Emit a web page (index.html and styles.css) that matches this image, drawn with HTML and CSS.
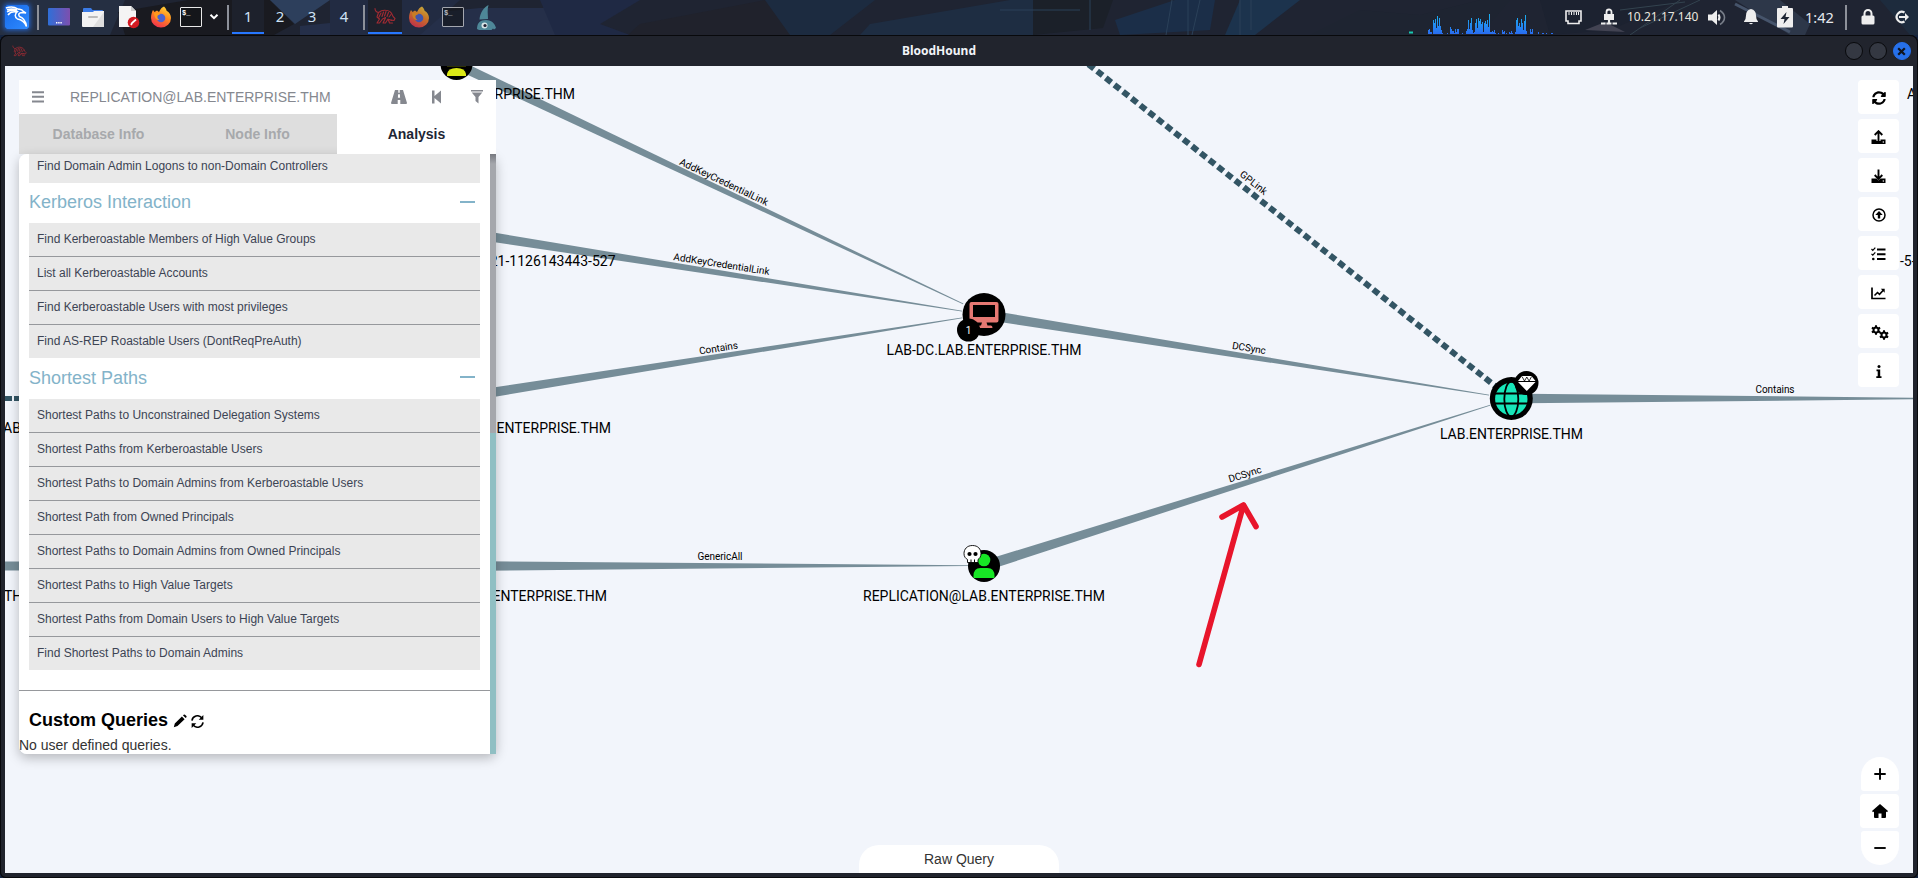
FILE: index.html
```html
<!DOCTYPE html>
<html lang="en">
<head>
<meta charset="utf-8">
<title>BloodHound</title>
<link rel="stylesheet" href="styles.css">
</head>
<body>
<svg width="0" height="0" class="defs">
  <defs>
    <linearGradient id="kali" x1="0" y1="0" x2="1" y2="1"><stop offset="0" stop-color="#1668e8"/><stop offset="1" stop-color="#2f8bff"/></linearGradient>
    <linearGradient id="desk"><stop offset="0" stop-color="#2f6fd8"/><stop offset="1" stop-color="#7d4fae"/></linearGradient>
    <linearGradient id="fire" x1="0.8" y1="0" x2="0.3" y2="1"><stop offset="0" stop-color="#ffd83a"/><stop offset="0.45" stop-color="#ff8a1e"/><stop offset="1" stop-color="#f2304f"/></linearGradient>
    <linearGradient id="cpu" x1="0" y1="14" x2="0" y2="34" gradientUnits="userSpaceOnUse"><stop offset="0" stop-color="#19b4f0"/><stop offset="1" stop-color="#2a6cf0"/></linearGradient>
    <symbol id="firefox" viewBox="0 0 22 22">
      <path d="M14 0.5c1.500 1.200 2.200 2.600 2.600 4.200 2.600 1.600 4.400 4 4.400 7.200a10 9.700 0 0 1-20 0C1 8.500 2 6 3 4l1.500 2 2.500-1.500 2 1.500c1.500-3 3-5 5-5.500z" fill="url(#fire)"/>
      <circle cx="11" cy="12" r="4.300" fill="#4b63d0"/>
      <path d="M4 7c2-1 5-.5 6.500 1l-3 1.500c-.5 2 .5 3.500 2 4.500-3 .5-5-2-5.500-7z" fill="#ff9a1c"/>
    </symbol>
    <symbol id="hound" viewBox="0 0 22 18">
      <g fill="none" stroke="currentColor" stroke-width="1.100" stroke-linecap="round" stroke-linejoin="round">
        <path d="M1 1.500c0 2 1.500 3.500 3.500 4 2-1.500 4.500-2.500 7-2.200 3 .2 5.500 1.700 6.500 4 .5 1.500 1.500 3 3 4.200l-1 2-3-.5"/>
        <path d="M4.500 5.500L3 10l2.500 2-2.500 4h2.500l3-4 3-1.500M7 6l-2 4M9.500 5L8 9.500M12 4.500L10.500 9M14.500 5.500L13 9.500M17 7.500l-2 2.500M11.500 11L9 16h2.500l2.500-4 1.500 4h3M15 12.500l3 1"/>
      </g>
    </symbol>
    <symbol id="sync" viewBox="0 0 512 512"><path d="M370.700 133.300C339.500 104 298.900 88 255.800 88c-77.500.1-144.300 53.200-162.800 126.900-1.300 5.400-6.100 9.100-11.700 9.100H24.100c-7.500 0-13.200-6.800-11.800-14.200C33.900 94.900 134.800 8 256 8c66.400 0 126.800 26.100 171.300 68.700L463 41c15.100-15.100 41-4.400 41 17v134c0 13.300-10.700 24-24 24H346c-21.400 0-32.100-25.900-17-41l41.700-41.700zM32 296h134c21.400 0 32.100 25.900 17 41l-41.800 41.800c31.300 29.300 71.800 45.300 114.900 45.200 77.400-.1 144.300-53.100 162.800-126.800 1.300-5.400 6.100-9.100 11.700-9.100h57.300c7.500 0 13.200 6.800 11.800 14.200C478.100 417.100 377.200 504 256 504c-66.400 0-126.800-26.100-171.300-68.700L49 471c-15.100 15.100-41 4.400-41-17V320c0-13.300 10.700-24 24-24z" fill="currentColor"/></symbol>
    <symbol id="gear" viewBox="-10 -10 20 20"><path d="M-2-9.500h4v19h-4z" fill="currentColor"/><path d="M-2-9.500h4v19h-4z" fill="currentColor" transform="rotate(60)"/><path d="M-2-9.500h4v19h-4z" fill="currentColor" transform="rotate(120)"/><circle r="5" fill="none" stroke="currentColor" stroke-width="4"/><circle r="3" fill="#fff"/></symbol>
  </defs>
</svg>

<header class="taskbar">
  <svg class="wallpaper" width="1918" height="35" viewBox="0 0 1918 35" preserveAspectRatio="none">
    <rect width="1918" height="35" fill="#1f2432"/>
    <path d="M0 0h125l-15 35H0z" fill="#252f42"/>
    <path d="M118 12l70-12h82l24 24-20 11H125z" fill="#191a20"/>
    <path d="M270 0h60l-35 24z" fill="#2d3f5c"/>
    <path d="M300 26L480 8h70l60 27H300z" fill="#252f49"/>
    <path d="M330 0h130l-40 35h-90z" fill="#222b42"/>
    <path d="M540 0h100l-40 24 30 11h-75z" fill="#1f2944"/>
    <path d="M640 24L765 0l40 14-15 21H628z" fill="#20222c"/>
    <path d="M765 0h110l-45 35h-40z" fill="#1c2b40"/>
    <path d="M870 24l140-24h23v35H860z" fill="#1e2d42"/>
    <path d="M1033 0h80l-10 28-70 7z" fill="#1b2029"/>
    <path d="M1115 20l60-20h40l-5 30-90 5z" fill="#1b2e48"/>
    <path d="M1240 0h60l-45 35h-30z" fill="#1c334d"/>
    <path d="M1310 35l50-25 60 5 60-15h30l-30 35z" fill="#1e2431"/>
    <path d="M1000 10h80M1090 0v30M1172 0l-6 35M1188 0v35M1200 0l-8 35M1240 0v35M1251 0v30" stroke="#2b4159" stroke-width="1" fill="none"/>
    <path d="M1540 0l140 0-70 30-60 5z" fill="#1c2230"/>
    <path d="M1585 30l20-8 20 10z" fill="#424352"/>
    <path d="M1630 35l50-35M1640 28l60-28M1620 10l65-8" stroke="#33434f" fill="none"/>
    <path d="M1735 0h45l30 24-5 11h-15z" fill="#2d3749"/>
    <path d="M1735 4l55 28" stroke="#46546b" stroke-width="3"/>
    <path d="M1880 0h38v35h-8z" fill="#1d2b3d"/>
  </svg>
  <div class="launchers">
    <svg class="ic kali" width="24" height="24" viewBox="0 0 24 24"><rect width="24" height="24" rx="2" fill="url(#kali)"/><path d="M1 3c5-2 9-1 12 1 2 .5 4 0 5 2l3 2-4-.5c-3 0-4 2-2.500 4 3 1 6 3 7 10-2-5-5-7-9-7.500-3-2-3-5 0-7.500C9 5 5 5 2 7M2 5c4-2 7-1 10 0M3 10c2-3 5-3.500 8-3" fill="none" stroke="#fff" stroke-width="1.500"/></svg>
    <i class="sep sep-a"></i>
    <svg class="ic desk" width="22" height="18" viewBox="0 0 22 18"><rect width="22" height="17.500" rx="1" fill="url(#desk)"/><path d="M8 14.800h6" stroke="#fff" stroke-width="1.500" stroke-dasharray="1.400 .8"/></svg>
    <svg class="ic folder" width="22" height="21" viewBox="0 0 22 21"><path d="M1 5V2q0-1 1-1h7l1.500 2H20q1 0 1 1v3H1z" fill="#3b7be6"/><path d="M0 5h11l1-1h10v15q0 1-1 1H1q-1 0-1-1z" fill="#f2f2f2"/><path d="M22 5v15H11z" fill="#dedede"/><rect x="6" y="9" width="10" height="2" rx="1" fill="#bbb"/></svg>
    <svg class="ic doc" width="21" height="24" viewBox="0 0 21 24"><path d="M0 1h12l5 5v16H0z" fill="#f4f4f4"/><path d="M12 1v5h5z" fill="#ccc"/><circle cx="14.500" cy="17.500" r="5.800" fill="#d31a22"/><path d="M12 20l1-2 4-3.500" stroke="#fff" stroke-width="1.800"/></svg>
    <svg class="ic fox" width="22" height="22"><use href="#firefox"/></svg>
    <span class="ic term">$_</span>
    <svg class="ic chev" width="10" height="8" viewBox="0 0 10 8"><path d="M1.500 1.800L5 5.200l3.500-3.400" fill="none" stroke="#fff" stroke-width="2"/></svg>
    <i class="sep sep-b"></i>
    <span class="ws active">1</span><span class="ws">2</span><span class="ws">3</span><span class="ws">4</span>
    <i class="sep sep-c"></i>
    <span class="task active"><svg width="22" height="18" class="hound"><use href="#hound"/></svg></span>
    <svg class="ic fox dim" width="22" height="22"><use href="#firefox"/></svg>
    <span class="ic term dim">$_</span>
    <svg class="ic shark" width="19" height="25" viewBox="0 0 19 25"><path d="M11.500 0C7 2 3 8 2.500 14.500L11 14c0-5-1-9 .5-14zM0 24c0-6 3-9 9-9 6 0 9 4 10 8l-2 1.500-1-1-1.500 1.500H2z" fill="#4e8798"/><circle cx="7.500" cy="20.500" r="3" fill="#d9e6e8"/><circle cx="8" cy="20.500" r="1.600" fill="#223"/></svg>
  </div>
  <div class="tray">
    <svg class="cpu" width="150" height="34" viewBox="1405 0 150 34"><path d="M1409 32.500h4" stroke="#19c8b0" stroke-width="2"/>
      <path fill="url(#cpu)" d="M1428 34v-4h1v-1h1v3h2v2zM1433 34V20h1v3h1v-4h1v9h1V16h1v10h1v-8h1v8h1v4h1v3h1v1zM1447 33h1v1h-1zM1450 34v-7h1v2h1v2h2v2h1v-4h1v3h1v-3h2v5zM1462 33h1v1h-1zM1466 34v-3h1v-2h1v-9h1v9h1v-6h1v-5h1v12h1v3h1v-1h1V23h1v-4h1v9h1V18h1v3h1v-2h1v5h1v-2h1v10h1v-9h1v-2h1v3h1v-4h1v7h1V14h1v18h2v-1h1v1h1v-2h1v3h1v1zM1498 33h1v1h-1zM1502 34v-4h1v2h1v-1h1v3zM1506 33h1v1h-1zM1509 34v-2h1v1h1v-2h1v2h1v1zM1515 34v-2h1v-12h1v-2h1v8h1v-3h1v4h1v-8h1v4h1v7h1v-9h1v-6h1v16h1v3h1v1zM1530 34v-5h1v3h1v-3h1v5zM1538 32h1v2h-1zM1542 33h2v1h-2zM1546 33h1v1h-1zM1551 33h2v1h-2z"/></svg>
    <svg class="ic eth" width="17" height="15" viewBox="0 0 17 15"><path d="M1 1h15v10h-2v2.500H3V11H1z" fill="none" stroke="#eee" stroke-width="1.600"/><path d="M4 2v3M6.500 2v3M9 2v3M11.500 2v3M13.500 2v3" stroke="#eee"/></svg>
    <svg class="ic vpn" width="16" height="18" viewBox="0 0 16 18"><path d="M3 6h10v6H3z" fill="#eee"/><path d="M5.500 6V4a2.500 2.500 0 0 1 5 0v2" fill="none" stroke="#eee" stroke-width="1.800"/><path d="M8 12v3M0 15.500h4.500M5.500 15.500h5M11.500 15.500H16" stroke="#eee" stroke-width="2.200"/></svg>
    <span class="ip">10.21.17.140</span>
    <svg class="ic vol" width="18" height="17" viewBox="0 0 18 17"><path d="M0 5.500h4L9 1v15L4 11.500H0z" fill="#eee"/><path d="M10.500 5.500q2 3 0 6" stroke="#eee" stroke-width="2" fill="none"/><path d="M12 1.500q4.500 3 4.500 7t-4.500 7" stroke="#777d88" stroke-width="1.600" fill="none"/></svg>
    <svg class="ic bell" width="14" height="16" viewBox="0 0 14 16"><path d="M7 0q5 1 5 6.500 0 4 2 6V13H0v-.5q2-2 2-6Q2 1 7 0zM5 14h4q-2 2.500-4 0z" fill="#eee"/></svg>
    <svg class="ic bat" width="16" height="22" viewBox="0 0 16 22"><path d="M5 0h6v2h4q1 0 1 1v17.500q0 1-1 1H1q-1 0-1-1V3q0-1 1-1h4z" fill="#eee"/><path d="M9.500 6L3.500 13h4L6.500 18l6-7h-4z" fill="#1c2433"/></svg>
    <span class="clock">1:42</span>
    <i class="sep sep-d"></i>
    <svg class="ic lock" width="14" height="16" viewBox="0 0 14 16"><rect x=".5" y="6.500" width="13" height="9" rx="1.500" fill="#eee"/><path d="M3.500 7V4.500a3.500 3.500 0 0 1 7 0V7" fill="none" stroke="#eee" stroke-width="2"/></svg>
    <svg class="ic out" width="16" height="14" viewBox="0 0 16 14"><path d="M10.500 2.500a5.200 5.200 0 1 0 0 9" fill="none" stroke="#eee" stroke-width="2.200"/><path d="M5 6h6V3l4 4-4 4V8H5z" fill="#eee"/></svg>
  </div>
</header>

<div class="window">
  <div class="titlebar">
    <svg class="hound" width="15" height="12"><use href="#hound"/></svg>
    <span class="title">BloodHound</span>
    <div class="wbtns"><i></i><i></i><i class="close"><svg width="9" height="9" viewBox="0 0 9 9"><path d="M1.200 1.200l6.600 6.600M7.800 1.200L1.200 7.800" stroke="#10141d" stroke-width="2.200"/></svg></i></div>
  </div>

  <main class="stage">
    <svg class="graph" width="1908" height="807" viewBox="5 66 1908 807">
      <g class="edge">
        <path d="M458.100 59.500L453.900 68.500 963 304.300 963.400 303.500z"/>
        <path d="M457.800 226.500L456.200 236.500 962 311.500 962.100 310.700z"/>
        <path d="M456.200 393L457.800 403 962.100 318.300 962 317.500z"/>
        <path d="M457 561v10l511-5v-.8z"/>
        <path d="M984.700 309.500L983.300 319.500 1489 395.500 1489.200 394.700z"/>
        <path d="M982.400 561L985.600 571 1490.500 405.600 1490.300 404.800z"/>
        <path d="M1511 393.500v10l405-4.200v-1.600z"/>
        <path d="M5 561.500h16v9H5z"/>
      </g>
      <path d="M5 398.500h7M14 398.500h7" stroke="#335564" stroke-width="5"/>
      <path d="M1088.500 64.300L1511 398.500" stroke="#335564" stroke-width="6" stroke-dasharray="7 4"/>
      <g class="elabel">
        <text transform="translate(722.500 185) rotate(25.400)" textLength="97">AddKeyCredentialLink</text>
        <text transform="translate(721 267.500) rotate(8.900)" textLength="97">AddKeyCredentialLink</text>
        <text transform="translate(719 351.500) rotate(-9)" textLength="39">Contains</text>
        <text transform="translate(720 560)" textLength="45">GenericAll</text>
        <text transform="translate(1248.500 351.500) rotate(9.100)" textLength="34">DCSync</text>
        <text transform="translate(1246 477.500) rotate(-17.500)" textLength="34">DCSync</text>
        <text transform="translate(1251.500 185.500) rotate(38.200)" textLength="32">GPLink</text>
        <text transform="translate(1775 393)" textLength="39">Contains</text>
      </g>
      <g class="nlabel">
        <text x="984" y="355" class="mid" textLength="195">LAB-DC.LAB.ENTERPRISE.THM</text>
        <text x="1511.500" y="439" class="mid" textLength="143">LAB.ENTERPRISE.THM</text>
        <text x="984" y="601" class="mid" textLength="242">REPLICATION@LAB.ENTERPRISE.THM</text>
        <text x="575" y="99" class="end">RPRISE.THM</text>
        <text x="615.500" y="266" class="end">21-1126143443-527</text>
        <text x="611" y="433" class="end">ENTERPRISE.THM</text>
        <text x="607" y="601" class="end">ENTERPRISE.THM</text>
        <text x="3" y="433">AB</text>
        <text x="4" y="601">TH</text>
        <text x="1907" y="99">A</text>
        <text x="1900" y="265.500">-5-</text>
      </g>
      <g>
        <circle cx="456.500" cy="64" r="16"/>
        <path d="M447 76v-2q1-6 9.500-6t9.500 6v2z" fill="#dbe817"/><path d="M447 66h19" stroke="#5d630a"/>
      </g>
      <g>
        <circle cx="984" cy="314.500" r="21.500"/>
        <path d="M971.500 302h25q2 0 2 2v16.500q0 2-2 2h-10l1 3h3.500q1.500 0 1.500 2.500H980q-2-2.500 0-2.500h1l1-3h-10.500q-2 0-2-2V304q0-2 2-2zM973 305v12h22v-12z" fill="#e67873" fill-rule="evenodd"/>
        <circle cx="968.500" cy="330" r="11.500"/>
        <text x="968.500" y="333.500" class="badge">1</text>
      </g>
      <g>
        <circle cx="1511.300" cy="398.500" r="21.500"/>
        <circle cx="1511.300" cy="399" r="16.200" fill="#17e6b9"/>
        <path d="M1494 393.500h35M1494 403.500h35" stroke="#000" stroke-width="1.800"/>
        <ellipse cx="1511.300" cy="399" rx="7" ry="17.500" fill="none" stroke="#000" stroke-width="1.800"/>
        <circle cx="1526.500" cy="383" r="12"/>
        <path d="M1522 376h9.500l4 5h-17.500zM1518 382h17.500l-8.700 9z" fill="#fff"/><path d="M1522 376.500l2.500 4.500 2.300-4 2.300 4 2.500-4.500" fill="none" stroke="#000" stroke-width=".8"/>
      </g>
      <g>
        <circle cx="984" cy="566" r="16"/>
        <circle cx="984" cy="560" r="6.300" fill="#17e625"/>
        <path d="M973.500 578v-2q0-8 7-8h7q7 0 7 8v2z" fill="#17e625"/>
        <path d="M972.500 545.500c5.500 0 8.500 3.600 8.500 8.200 0 3-1.500 4.800-3 5.800v3h-10.500v-3c-1.800-1-3.500-2.800-3.500-5.800 0-4.600 3-8.200 8.500-8.200z" fill="#fff" stroke="#000" stroke-width=".9"/>
        <circle cx="969.500" cy="554" r="2.100"/><circle cx="975.500" cy="554" r="2.100"/><path d="M971 559.500v3M974.500 559.500v3" stroke="#000" stroke-width="1"/>
      </g>
      <path d="M1199 664.500L1243.500 505M1222 517L1243.500 505L1256 526.500" fill="none" stroke="#e8152b" stroke-width="5.600" stroke-linecap="round" stroke-linejoin="round"/>
    </svg>

    <section class="panel">
      <div class="search">
        <svg class="bars" width="12" height="12" viewBox="0 0 12 12"><path d="M0 1.200h12M0 5.800h12M0 10.500h12" stroke="currentColor" stroke-width="2"/></svg>
        <span class="query">REPLICATION@LAB.ENTERPRISE.THM</span>
        <svg class="road" width="16" height="14" viewBox="0 0 16 14"><path d="M4 0h3.300v2.800h1.400V0H12l4 13q0 1-1 1H9.300v-4H6.700v4H1q-1 0-1-1zM7.100 4.300l-.2 3.400h2.200l-.2-3.400z" fill="currentColor" fill-rule="evenodd"/></svg>
        <svg class="back" width="9" height="14" viewBox="0 0 9 14"><path d="M0 .5h2.500v5.500L9 .5v13L2.500 8v5.500H0z" fill="currentColor"/></svg>
        <svg class="filt" width="12" height="14" viewBox="0 0 12 14"><path d="M0 0h12v1.500H0zM.7 2.500h10.600L7.500 7v6.500L4.500 11V7z" fill="currentColor"/></svg>
      </div>
      <nav class="tabs"><span>Database Info</span><span class="nodeinfo">Node Info</span><span class="on">Analysis</span></nav>
      <div class="body">
        <div class="scroll">
          <ul class="list first"><li>Find Domain Admin Logons to non-Domain Controllers</li></ul>
          <h3>Kerberos Interaction<i></i></h3>
          <ul class="list">
            <li>Find Kerberoastable Members of High Value Groups</li>
            <li>List all Kerberoastable Accounts</li>
            <li>Find Kerberoastable Users with most privileges</li>
            <li>Find AS-REP Roastable Users (DontReqPreAuth)</li>
          </ul>
          <h3>Shortest Paths<i></i></h3>
          <ul class="list">
            <li>Shortest Paths to Unconstrained Delegation Systems</li>
            <li>Shortest Paths from Kerberoastable Users</li>
            <li>Shortest Paths to Domain Admins from Kerberoastable Users</li>
            <li>Shortest Path from Owned Principals</li>
            <li>Shortest Paths to Domain Admins from Owned Principals</li>
            <li>Shortest Paths to High Value Targets</li>
            <li>Shortest Paths from Domain Users to High Value Targets</li>
            <li>Find Shortest Paths to Domain Admins</li>
          </ul>
          <div class="rule"></div>
          <h4>Custom Queries
            <svg class="pencil" width="14" height="14" viewBox="0 0 14 14"><path d="M1.800 9.400L8.900 2.500l2.700 2.700-7.100 6.900L.8 13.200zM10 1.400l.7-.7q.6-.6 1.300 0L13.400 2q.5.600 0 1.300l-.7.800z" fill="currentColor"/></svg>
            <svg class="re" width="13" height="13" viewBox="0 0 14 14"><path d="M1 6a6 6 0 0 1 10.500-3M13 8A6 6 0 0 1 2.500 11" fill="none" stroke="currentColor" stroke-width="1.700"/><path d="M13.300 0v5h-5zM.7 14V9h5z" fill="currentColor"/></svg>
          </h4>
          <p>No user defined queries.</p>
        </div>
        <div class="bar"><div class="thumb"></div></div>
      </div>
    </section>

    <div class="tools">
      <button><svg width="14" height="14"><use href="#sync"/></svg></button>
      <button><svg width="15" height="15" viewBox="0 0 15 15"><path d="M.5 9.500h14v4.500H.5z"/><path d="M5.500 9h4v2h-4z" fill="#fff"/><path d="M7.500 11V1.500M3.700 5l3.800-3.800L11.300 5" fill="none" stroke="#000" stroke-width="1.900"/><circle cx="12.300" cy="12" r=".7" fill="#fff"/></svg></button>
      <button><svg width="15" height="15" viewBox="0 0 15 15"><path d="M.5 9.500h14v4.500H.5z"/><path d="M4.500 8l3 3.500 3-3.500z" fill="#fff"/><path d="M7.500 .500v9M3.700 6l3.800 3.800L11.300 6" fill="none" stroke="#000" stroke-width="1.900"/><circle cx="12.300" cy="12" r=".7" fill="#fff"/></svg></button>
      <button><svg width="14" height="14" viewBox="0 0 14 14"><circle cx="7" cy="7" r="6" fill="none" stroke="#000" stroke-width="1.500"/><path d="M7 3l3.700 4H8.200v3.500H5.800V7H3.300z"/></svg></button>
      <button><svg width="15" height="14" viewBox="0 0 15 14"><path d="M6 2.500h8.500M6 7.200h8.500M6 12h8.500" stroke="#000" stroke-width="1.900"/><path d="M.5 2l1.300 1.300L4.300.600M.5 6.800l1.300 1.300 2.500-2.700" fill="none" stroke="#000" stroke-width="1.200"/><circle cx="2.300" cy="12" r="1.300"/></svg></button>
      <button><svg width="15" height="13" viewBox="0 0 15 13"><path d="M1 .5v11h13.500" fill="none" stroke="#000" stroke-width="1.700"/><path d="M3.500 8.500l3-3 2 1.800 4-4.300" fill="none" stroke="#000" stroke-width="1.600"/><path d="M9.800 1.800h3.900v3.900z"/></svg></button>
      <button><svg class="gears" width="18" height="15" viewBox="0 0 18 15"><use href="#gear" x="0" y="0" width="10" height="10"/><use href="#gear" x="8" y="5" width="10" height="10"/></svg></button>
      <button><svg width="6" height="13" viewBox="0 0 6 13"><circle cx="3" cy="1.500" r="1.500"/><path d="M.5 4.500h3.700v6.800h1.300V13H.3v-1.700h1.400V6.200H.5z"/></svg></button>
    </div>

    <div class="zoomer">
      <button class="in"><svg width="12" height="12" viewBox="0 0 12 12"><path d="M6 .3v11.400M.3 6h11.400" stroke="#000" stroke-width="1.900"/></svg></button>
      <button class="home"><svg width="16" height="14" viewBox="0 0 16 14"><path d="M8 0l8 7-1 1.200-1-.700V13q0 1-1 1H9.500V9.500h-3V14H3q-1 0-1-1V7.500l-1 .7L0 7z"/></svg></button>
      <button class="outz"><svg width="12" height="12" viewBox="0 0 12 12"><path d="M.3 6h11.400" stroke="#000" stroke-width="1.900"/></svg></button>
    </div>

    <div class="raw">Raw Query</div>
  </main>
</div>
</body>
</html>
```

FILE: styles.css
```css
* { box-sizing: border-box; }
body { margin: 0; width: 1918px; height: 878px; overflow: hidden; background: #15243f; font-family: "Liberation Sans", Arial, sans-serif; }
.defs { position: absolute; }
svg { display: block; flex: none; }

.taskbar { position: relative; height: 35px; display: flex; justify-content: space-between; color: #e6e9ee; font-family: "Noto Sans", sans-serif; }
.wallpaper { position: absolute; inset: 0; }
.launchers, .tray { position: relative; display: flex; align-items: center; height: 34px; }
.launchers { padding-left: 5px; }
.kali { border-radius: 2px; box-shadow: 0 0 5px 1px #2468d8; }
.sep { flex: none; width: 2px; height: 25px; background: #8d919a; }
.sep-a { margin: 0 9px 0 8px; }
.desk { margin-right: 12px; }
.folder { margin-right: 15px; }
.doc { margin-right: 10px; }
.fox { margin-right: 8px; }
.term { flex: none; width: 22px; height: 20px; border: 1.500px solid #e8e8e8; border-radius: 1px; background: #14161a; color: #fff; font: bold 7px/9px "Liberation Mono", monospace; padding: 1px 0 0 1px; }
.chev { margin: 0 8px 0 7px; }
.sep-b { margin: 0 3px 0 0; }
.ws { width: 32px; height: 34px; line-height: 33px; text-align: center; font-size: 15px; color: #cfe2f5; }
.active { background: #1d212c; border-bottom: 2px solid #2777ff; }
.sep-c { margin: 0 3px; }
.task { width: 34px; height: 34px; display: flex; align-items: center; justify-content: center; margin-right: 6px; }
.hound { color: #a22b33; }
.dim { opacity: .65; }
.fox.dim { margin-right: 12px; opacity: .75; }
.shark { margin-left: 13px; }

.cpu { margin-right: 10px; }
.eth { margin-right: 19px; }
.vpn { margin-right: 10px; }
.ip { width: 71px; font-size: 12px; line-height: 32px; margin-right: 10px; color: #e9e6df; }
.vol { margin-right: 18px; }
.bell { margin-right: 19px; }
.bat { margin-right: 12px; }
.clock { width: 28px; font-size: 14.500px; line-height: 32px; margin-right: 12px; }
.sep-d { margin-right: 14px; }
.lock { margin-right: 19px; }
.out { margin-right: 8px; }

.window { height: 843px; background: #21242d; border-radius: 8px 8px 6px 6px; padding: 0 5px 5px; box-shadow: inset 0 1px #08090c, inset 1px 0 #08090c, inset -1px 0 #08090c, inset 0 -1px #08090c; }
.titlebar { height: 31px; display: flex; align-items: center; justify-content: space-between; padding: 1px 2px 0 7px; }
.title { font: bold 12px/30px "Noto Sans", sans-serif; color: #f2f4f8; padding-left: 6px; }
.wbtns { display: flex; gap: 6px; }
.wbtns i { width: 18px; height: 18px; border-radius: 50%; background: #343842; border: 1.500px solid #08090c; display: flex; align-items: center; justify-content: center; }
.wbtns .close { background: #2670ea; border-color: #2670ea; }

.stage { position: relative; height: 807px; background: #f2f5fb; overflow: hidden; }
.graph { position: absolute; inset: 0; }
.edge { fill: #768d98; }
.elabel, .nlabel { font-family: Roboto, sans-serif; fill: #000; }
.elabel { font-size: 10px; text-anchor: middle; }
.nlabel { font-size: 14px; }
.mid { text-anchor: middle; }
.end { text-anchor: end; }
.badge { font: 10px Roboto, sans-serif; fill: #fff; text-anchor: middle; }

.panel { position: absolute; left: 14px; top: 14px; width: 477px; }
.search { height: 34px; background: #fff; display: flex; align-items: center; color: #85888f; padding-left: 13px; }
.query { width: 320px; margin-left: 26px; font-size: 14px; line-height: 34px; }
.road { margin-left: 1px; }
.back { margin-left: 25px; }
.filt { margin-left: 30px; }
.tabs { display: grid; grid-template-columns: 159px 159px 159px; height: 40px; background: #dedede; color: #a7a9ac; font: bold 14px/40px "Liberation Sans", Arial, sans-serif; text-align: center; }
.tabs .on { background: #fff; color: #1e2635; }
.body { display: flex; height: 600px; box-shadow: 0 4px 12px rgba(0,0,0,.25); border-radius: 8px; }
.scroll { width: 471px; height: 600px; background: #fff; border-radius: 8px 0 0 8px; }
.bar { width: 6px; background: #90bfc3; }
.thumb { height: 279px; background: linear-gradient(#77797f, #a5a7ac 10px); }
.list { list-style: none; margin: 0 10px; padding: 0; background: #e9e9e9; }
.list li { height: 34px; line-height: 33px; padding-left: 8px; font-size: 12px; color: #3c4454; border-bottom: 1px solid #96989c; }
.list li:last-child { border-bottom: 0; height: 33px; }
.list.first li { height: 29px; line-height: 24px; }
h3 { height: 40px; margin: 0 10px; font-weight: 400; font-size: 18px; line-height: 36px; color: #83b3c9; display: flex; align-items: center; justify-content: space-between; padding-bottom: 2px; }
.list + h3 ~ h3 { height: 41px; }
h3 i { width: 15px; height: 2px; background: #83b3c9; margin: 0 5px 1px 0; }
.rule { height: 1px; background: #96989c; margin-top: 20px; }
h4 { margin: 14px 0 0 10px; height: 30px; display: flex; align-items: center; font-size: 18px; color: #000; }
.pencil { margin: 1px 4px 0 5px; }
.re { margin-top: 2px; }
p { margin: 0; font-size: 14px; line-height: 20px; color: #333; }

button { border: 0; padding: 0; background: #fff; display: flex; align-items: center; justify-content: center; }
.tools { position: absolute; left: 1853px; top: 14px; display: flex; flex-direction: column; gap: 5px; }
.tools button { width: 41px; height: 34px; border-radius: 4px; padding-top: 2px; }
.gears { margin-left: 3px; }
.zoomer { position: absolute; left: 1855px; top: 691px; display: flex; flex-direction: column; gap: 3px; align-items: flex-end; }
.zoomer button { width: 38px; height: 34px; }
.zoomer .in { border-radius: 19px 19px 3px 3px; }
.zoomer .home { width: 39px; border-radius: 4px; }
.zoomer .outz { border-radius: 3px 3px 19px 19px; }
.raw { position: absolute; left: 854px; top: 779px; width: 200px; height: 28px; background: #fff; border-radius: 20px 20px 0 0; text-align: center; font-size: 14px; line-height: 28px; color: #333; }
```
